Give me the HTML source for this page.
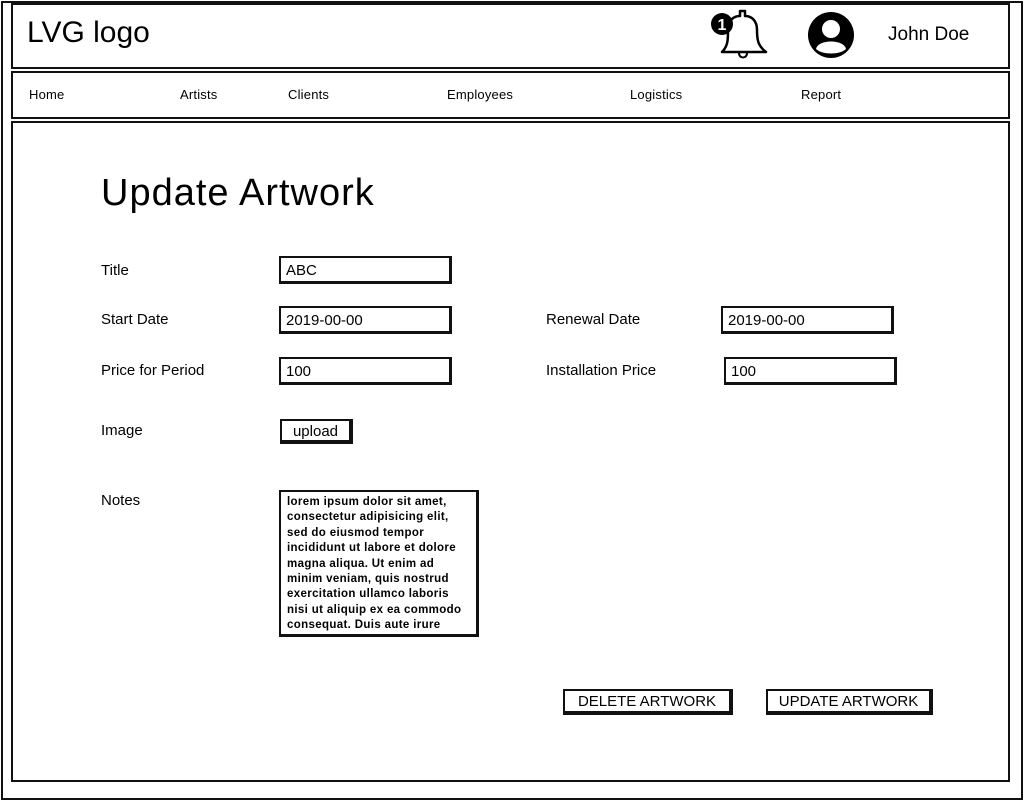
<!DOCTYPE html>
<html><head><style>
body{margin:0;width:1024px;height:801px;background:#fff;font-family:"Liberation Sans",sans-serif;color:#000;position:relative;overflow:hidden}
.b{position:absolute;border:2px solid #111;box-sizing:border-box;background:#fff}
.t{position:absolute;white-space:nowrap}
.in{position:absolute;border:2px solid #111;border-right-width:3px;border-bottom-width:3px;box-sizing:border-box;font-size:15px;padding:4px 0 0 5px}
.btn{position:absolute;border:2px solid #111;border-right-width:4px;border-bottom-width:4px;box-sizing:border-box;font-size:15px;text-align:center;background:#fff}
.l{font-size:15px}
.nav{font-size:13px;top:87px;letter-spacing:0.2px}
</style></head><body>
<div class="b" style="left:1px;top:1px;width:1022px;height:799px"></div>
<div class="b" style="left:11px;top:3px;width:999px;height:66px"></div>
<div class="b" style="left:11px;top:71px;width:999px;height:48px"></div>
<div class="b" style="left:11px;top:121px;width:999px;height:661px"></div>
<div class="t" style="left:27px;top:16px;font-size:30px">LVG logo</div>
<svg style="position:absolute;left:706px;top:6px" width="66" height="56" viewBox="0 0 66 56">
<path d="M16 46 C22 40 22 34 22 24 C22 14 28 10 34 10 L34 5 L39 5 L39 10 C45 10 51 14 51 24 C51 34 52 40 60 46 Z" fill="#fff" stroke="#000" stroke-width="2.5" stroke-linejoin="round"/>
<path d="M33 47 C33 53 41 53 41 47" fill="none" stroke="#000" stroke-width="2"/>
<circle cx="16" cy="18" r="11" fill="#000"/>
<text x="16" y="24" font-size="16" font-weight="bold" fill="#fff" text-anchor="middle" font-family="Liberation Sans">1</text>
</svg>
<svg style="position:absolute;left:806px;top:11px" width="50" height="48" viewBox="0 0 50 48">
<circle cx="25" cy="24" r="23" fill="#000"/>
<circle cx="25" cy="18" r="9" fill="#fff"/>
<path d="M10 38 C12 28 38 28 40 38 C34 44 16 44 10 38Z" fill="#fff"/>
</svg>
<div class="t" style="left:888px;top:24px;font-size:19px">John Doe</div>
<div class="t nav" style="left:29px">Home</div>
<div class="t nav" style="left:180px">Artists</div>
<div class="t nav" style="left:288px">Clients</div>
<div class="t nav" style="left:447px">Employees</div>
<div class="t nav" style="left:630px">Logistics</div>
<div class="t nav" style="left:801px">Report</div>
<div class="t" style="left:101px;top:172px;font-size:38px;letter-spacing:1px">Update Artwork</div>
<div class="t l" style="left:101px;top:262px">Title</div>
<div class="t l" style="left:101px;top:311px">Start Date</div>
<div class="t l" style="left:101px;top:362px">Price for Period</div>
<div class="t l" style="left:101px;top:422px">Image</div>
<div class="t l" style="left:101px;top:492px">Notes</div>
<div class="t l" style="left:546px;top:311px">Renewal Date</div>
<div class="t l" style="left:546px;top:362px">Installation Price</div>
<div class="in" style="left:279px;top:256px;width:173px;height:28px">ABC</div>
<div class="in" style="left:279px;top:306px;width:173px;height:28px">2019-00-00</div>
<div class="in" style="left:279px;top:357px;width:173px;height:28px">100</div>
<div class="in" style="left:721px;top:306px;width:173px;height:28px">2019-00-00</div>
<div class="in" style="left:724px;top:357px;width:173px;height:28px">100</div>
<div class="btn" style="left:280px;top:419px;width:73px;height:25px;padding-top:2px">upload</div>
<div class="in" style="left:279px;top:490px;width:200px;height:147px;font-size:11.5px;font-weight:bold;line-height:15.4px;padding:3px 6px;white-space:normal;overflow:hidden;letter-spacing:0.35px">lorem ipsum dolor sit amet, consectetur adipisicing elit, sed do eiusmod tempor incididunt ut labore et dolore magna aliqua. Ut enim ad minim veniam, quis nostrud exercitation ullamco laboris nisi ut aliquip ex ea commodo consequat. Duis aute irure</div>
<div class="btn" style="left:563px;top:689px;width:170px;height:26px;padding-top:2px">DELETE ARTWORK</div>
<div class="btn" style="left:766px;top:689px;width:167px;height:26px;padding-top:2px">UPDATE ARTWORK</div>
</body></html>
